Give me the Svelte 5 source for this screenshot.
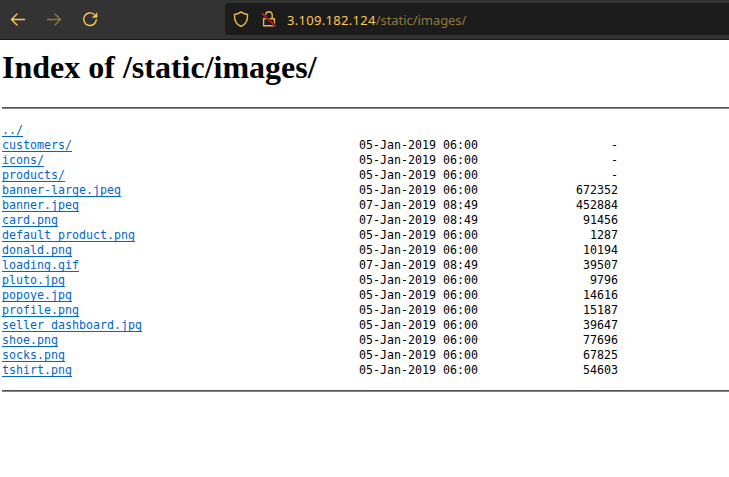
<script>
  const entries = [
    ['../', '', ''],
    ['customers/', '05-Jan-2019 06:00', '-'],
    ['icons/', '05-Jan-2019 06:00', '-'],
    ['products/', '05-Jan-2019 06:00', '-'],
    ['banner-large.jpeg', '05-Jan-2019 06:00', '672352'],
    ['banner.jpeg', '07-Jan-2019 08:49', '452884'],
    ['card.png', '07-Jan-2019 08:49', '91456'],
    ['default_product.png', '05-Jan-2019 06:00', '1287'],
    ['donald.png', '05-Jan-2019 06:00', '10194'],
    ['loading.gif', '07-Jan-2019 08:49', '39507'],
    ['pluto.jpg', '05-Jan-2019 06:00', '9796'],
    ['popoye.jpg', '05-Jan-2019 06:00', '14616'],
    ['profile.png', '05-Jan-2019 06:00', '15187'],
    ['seller_dashboard.jpg', '05-Jan-2019 06:00', '39647'],
    ['shoe.png', '05-Jan-2019 06:00', '77696'],
    ['socks.png', '05-Jan-2019 06:00', '67825'],
    ['tshirt.png', '05-Jan-2019 06:00', '54603']
  ];
</script>

<div class="window">
  <header class="toolbar">
    <nav class="buttons">
      <svg class="icon" width="16" height="16" viewBox="0 0 16 16">
        <path d="M14.5 8.5H1.8M7 2.9 1.5 8.5 7 14.1" />
      </svg>
      <svg class="icon dim" width="16" height="16" viewBox="0 0 16 16">
        <path d="M1.5 8.5h12.7M9 2.9l5.5 5.6L9 14.1" />
      </svg>
      <svg class="icon" width="16" height="16" viewBox="0 0 16 16">
        <path d="M12 3.3A6.3 6.3 0 1 0 14.3 8.6" />
        <path class="solid" d="M15.1 1.9v4.5h-4.7z" />
      </svg>
    </nav>
    <div class="urlbar">
      <svg class="icon shield" width="16" height="16" viewBox="0 0 16 16">
        <path d="M8 .9C6.2 2.4 4 3.1 1.5 3.5 1.2 9 3.2 13.4 8 15.5c4.8-2.1 6.8-6.5 6.5-12C12 3.1 9.8 2.4 8 .9z" />
      </svg>
      <svg class="icon lock" width="16" height="16" viewBox="0 0 16 16">
        <path d="M4.6 4.6V4a3.2 3.2 0 0 1 6.6 0v3.7M2.6 7.8h10.8v7H2.6z" />
        <path class="cut" d="M1.6 2.8l12.8 12.4" />
        <path class="slash" d="M1.2 2.4l13.2 12.8" />
      </svg>
      <span class="address"><b>3.109.182.124</b>/static/images/</span>
    </div>
  </header>
  <main>
    <h1>Index of /static/images/</h1>
    <hr />
    <div class="listing">
      {#each entries as [name, date, size]}
        <div class="row">
          <span class="name"><a href="#top">{name}</a></span>
          <span class="date">{date}</span>
          <span class="size">{size}</span>
        </div>
      {/each}
    </div>
    <hr />
  </main>
</div>

<style>
  :global(body) {
    margin: 0;
    background: #fff;
    overflow: hidden;
  }
  .window {
    width: 729px;
    height: 477px;
    overflow: hidden;
    background: #fff;
  }
  .toolbar {
    box-sizing: border-box;
    display: flex;
    height: 40px;
    padding-top: 3px;
    background: #333;
    border-bottom: 1px solid #1a1a1a;
  }
  .buttons {
    box-sizing: border-box;
    display: flex;
    gap: 20px;
    width: 225px;
    padding: 8px 0 0 10px;
  }
  .icon {
    flex: none;
    fill: none;
    stroke: #ffc850;
    stroke-width: 1.4;
    stroke-linecap: round;
    stroke-linejoin: round;
  }
  .dim {
    opacity: 0.45;
  }
  .solid {
    fill: #ffc850;
    stroke-width: 0.5;
  }
  .shield,
  .lock {
    opacity: 0.9;
  }
  .cut {
    stroke: #1c1c1c;
    stroke-width: 2.6;
  }
  .slash {
    stroke: #f0183f;
    stroke-width: 1.4;
  }
  .urlbar {
    flex: 1;
    display: flex;
    align-items: center;
    height: 32px;
    padding-left: 8px;
    background: #1c1c1c;
    border-radius: 4px 0 0 4px;
  }
  .lock {
    margin-left: 12px;
  }
  .address {
    margin-left: 10px;
    padding-top: 2px;
    font: 13px/30px "Noto Sans", "Open Sans", sans-serif;
    letter-spacing: -0.05px;
    color: #917840;
    white-space: nowrap;
  }
  .address b {
    font-weight: 400;
    letter-spacing: 0.3px;
    color: #ffc850;
  }
  main {
    padding-left: 2px;
  }
  h1 {
    margin: 0;
    padding-top: 9px;
    height: 58px;
    font: bold 32px/37px "Liberation Serif", serif;
    color: #000;
  }
  hr {
    margin: 0;
    height: 1px;
    border: 0;
    border-top: 1px solid #555;
    background: #858585;
  }
  .listing {
    padding: 14px 0 12px;
    font: 11.63px/15px "DejaVu Sans Mono", monospace;
    color: #000;
  }
  .row {
    display: flex;
    height: 15px;
    white-space: pre;
  }
  .name {
    width: 357px;
  }
  .date {
    width: 140px;
  }
  .size {
    width: 119px;
    text-align: right;
  }
  a {
    color: #0066cc;
    text-decoration: underline;
    text-decoration-thickness: 1px;
    text-underline-offset: 2px;
    text-decoration-skip-ink: none;
  }
</style>
